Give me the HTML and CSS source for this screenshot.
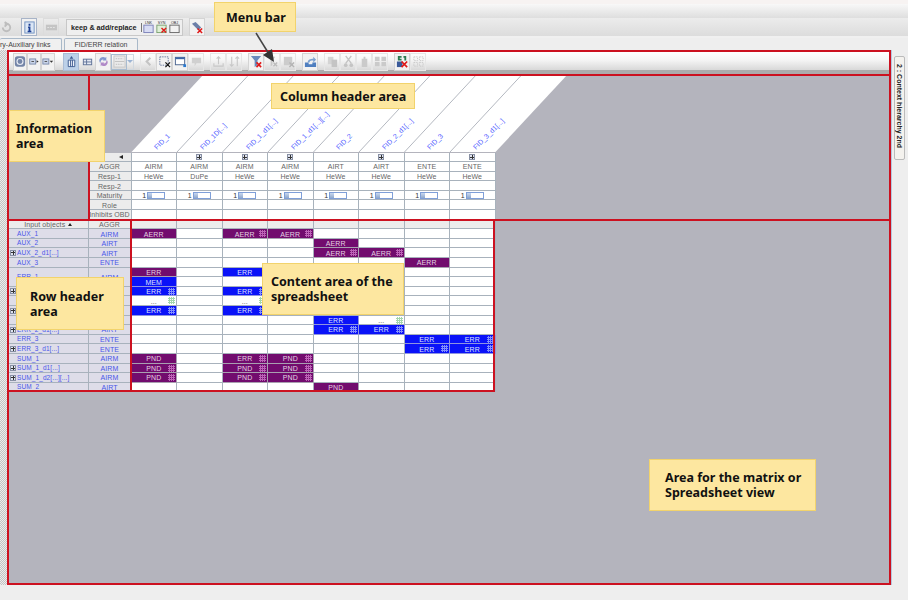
FILE: index.html
```html
<!DOCTYPE html>
<html lang="en">
<head>
    <meta charset="UTF-8">
    <meta name="viewport" content="width=device-width, initial-scale=1.0">
    <title>Matrix and Spreadsheet view</title>
    <link rel="stylesheet" href="styles.css">
</head>
<body>

    <div class="titlebar"></div>
    <div class="menubar"></div>

    <div class="topbar">
        <div class="btn top-redo off"><svg viewBox="0 0 14 14"><path d="M3 7a4 4 0 1 0 4-4H5M5 1 8 3 5 6" fill="none" stroke="#bdbdbd" stroke-width="2"/></svg></div>
        <div class="btn top-info box"><svg viewBox="0 0 14 14"><rect x="2" y="1" width="10" height="12" fill="#dbe6f5" stroke="#6f8fc0"/><path d="M6 3h2v2H6zM5.500 6H8v4.500h1V12H5v-1.500h1V7.500h-.5z" fill="#1c3f94"/></svg></div>
        <div class="btn top-gray"><svg viewBox="0 0 14 14"><rect x="1" y="4" width="12" height="6" fill="#c4c4c4"/><path d="M2.500 7h9" stroke="#e4e4e4" stroke-dasharray="2 1"/></svg></div>
        <div class="keep-group">
            <span class="keep-label">keep &amp; add/replace</span>
            <svg class="keep-icon" viewBox="0 0 14 14"><rect x="2" y="5" width="10" height="8" fill="#d8dcf4" stroke="#7a80b8"/><text x="7" y="4" class="tiny">LNK</text></svg>
            <svg class="keep-icon" viewBox="0 0 14 14"><rect x="2" y="5" width="10" height="8" fill="#dff0d8" stroke="#7aa070"/><path d="M7 8l5 5m0-5-5 5" stroke="#e01818" stroke-width="1.500"/><text x="7" y="4" class="tiny">SYN</text></svg>
            <svg class="keep-icon" viewBox="0 0 14 14"><rect x="2" y="5" width="10" height="8" fill="#f2f2f2" stroke="#666"/><text x="7" y="4" class="tiny">OBJ</text></svg>
        </div>
        <div class="btn top-shield box"><svg viewBox="0 0 14 14"><path d="M1 3 5 1l6 6-3 3z" fill="#6c7fa8"/><path d="M7 8l5 5m0-5-5 5" stroke="#e01818" stroke-width="1.600"/></svg></div>
    </div>

    <div class="tabs">
        <div class="tab tab-cut">ry-Auxiliary links</div>
        <div class="tab">FID/ERR relation</div>
    </div>

    <div class="app">
        <div class="left-strip"></div>

        <div class="center">
            <div class="toolbar">
                <div class="group narrow">
                    <div class="btn box"><svg viewBox="0 0 14 14"><rect x="1" y="1" width="12" height="12" rx="3" fill="#7485a8"/><circle cx="7" cy="7" r="3.500" fill="none" stroke="#e8ecf4" stroke-width="1.300"/></svg></div>
                    <div class="btn box"><svg viewBox="0 0 14 14"><rect x="2" y="4" width="7" height="6" fill="#c9d4e8" stroke="#7485a8"/><path d="M4 7h3" stroke="#444"/><path d="M10 5.500l2.500 1.500-2.500 1.500z" fill="#333"/></svg></div>
                    <div class="btn box"><svg viewBox="0 0 14 14"><rect x="1" y="4" width="7" height="6" fill="#c9d4e8" stroke="#7485a8"/><path d="M3 7h3" stroke="#444"/><path d="M9 6h4l-2 2.500z" fill="#333"/></svg></div>
                </div>
                <div class="group">
                    <div class="btn pressed"><svg viewBox="0 0 14 14"><path d="M3.500 5.500h7v7h-7zM6 5.500v7M8 5.500v7" fill="#eef2fa" stroke="#3b5a90"/><path d="M7 1 9 4H5z" fill="#3b5a90"/></svg></div>
                    <div class="btn"><svg viewBox="0 0 14 14"><rect x="2.500" y="4.500" width="9" height="6" fill="#e4e8f2" stroke="#5f7298"/><path d="M2.500 7.500h9M6 4.500v6" stroke="#5f7298"/></svg></div>
                    <div class="btn box"><svg viewBox="0 0 14 14"><path d="M3 8a4 4 0 0 1 6-5l1-1v4H6l1-1a2.500 2.500 0 0 0-3 3z" fill="#8298d0"/><path d="M11 6a4 4 0 0 1-6 5l-1 1V8h4l-1 1a2.500 2.500 0 0 0 3-3z" fill="#b08ac8"/></svg></div>
                    <div class="combo">
                        <div class="combo-face"><svg viewBox="0 0 14 14"><rect x="1" y="1" width="12" height="12" fill="#eaeaea" stroke="#c4c4c4"/><path d="M2 7h10" stroke="#c0c0c0"/><path d="M3 4h8M3 10h8" stroke="#bcbcbc" stroke-dasharray="1.500 1"/></svg></div>
                        <div class="combo-arrow"></div>
                    </div>
                </div>
                <div class="group">
                    <div class="btn off"><svg viewBox="0 0 14 14"><path d="M9 3 5 7l4 4" fill="none" stroke="#c4c4c4" stroke-width="2.200"/></svg></div>
                    <div class="btn box"><svg viewBox="0 0 14 14"><rect x="2" y="2" width="9" height="9" fill="none" stroke="#5f7198" stroke-dasharray="1.500 1"/><path d="M8 8l5 5m0-5-5 5" stroke="#111" stroke-width="1.300"/></svg></div>
                    <div class="btn box"><svg viewBox="0 0 14 14"><rect x="1.500" y="2.500" width="10" height="8" fill="#fff" stroke="#4a6490"/><path d="M1.500 3.500h10" stroke="#3b66a8" stroke-width="2"/><path d="M10 10h3v3h-3z" fill="#2b7ad0"/></svg></div>
                    <div class="btn off"><svg viewBox="0 0 14 14"><path d="M2 3h10v6H7l-2 3V9H2z" fill="#d0d0d0"/></svg></div>
                </div>
                <div class="group">
                    <div class="btn off"><svg viewBox="0 0 14 14"><path d="M7 2v8M5 4l2-2 2 2M2 9v3h10V9" fill="none" stroke="#c8c8c8" stroke-width="1.200"/></svg></div>
                    <div class="btn off"><svg viewBox="0 0 14 14"><path d="M4 2v10M2 10l2 2 2-2M10 12V2M8 4l2-2 2 2" fill="none" stroke="#c8c8c8" stroke-width="1.200"/></svg></div>
                </div>
                <div class="group">
                    <div class="btn box"><svg viewBox="0 0 14 14"><path d="M1 1h11L8 6v5L5 13V6z" fill="#6a8abc"/><path d="M7 8l5 5m0-5-5 5" stroke="#e01818" stroke-width="1.700"/></svg></div>
                    <div class="btn off"><svg viewBox="0 0 14 14"><path d="M2 2h8L7 6v5L5 12V6z" fill="#c8c8c8"/><path d="M8 8l4 4m0-4-4 4" stroke="#bcbcbc" stroke-width="1.500"/></svg></div>
                    <div class="btn off"><svg viewBox="0 0 14 14"><path d="M2 2h9v9H2z" fill="#cccccc"/><path d="M8 8l5 5m0-5-5 5" stroke="#b4b4b4" stroke-width="1.500"/></svg></div>
                </div>
                <div class="group">
                    <div class="btn box"><svg viewBox="0 0 14 14"><path d="M1 8v5h12V8H9v2H5V8z" fill="#4f7fc0"/><path d="M4 8c0-3 3-4 6-4V2l3 3-3 3V6C8 6 6 6 6 8z" fill="#7aa0d0"/></svg></div>
                </div>
                <div class="group">
                    <div class="btn off"><svg viewBox="0 0 14 14"><path d="M2 2h6v8H2z" fill="#d4d4d4"/><path d="M6 5h6v8H6z" fill="#c4c4c4"/></svg></div>
                    <div class="btn off"><svg viewBox="0 0 14 14"><path d="M4 1l6 8M10 1 4 9" stroke="#c4c4c4" stroke-width="1.500"/><circle cx="4" cy="11" r="2" fill="#c4c4c4"/><circle cx="10" cy="11" r="2" fill="#c4c4c4"/></svg></div>
                    <div class="btn off"><svg viewBox="0 0 14 14"><path d="M4 4h2V2h2v2h2v9H4z" fill="#cacaca"/></svg></div>
                    <div class="btn off"><svg viewBox="0 0 14 14"><path d="M1 2h5v10H1zM8 2h5v10H8z" fill="#cacaca"/><path d="M1 7h12" stroke="#eee"/></svg></div>
                </div>
                <div class="group">
                    <div class="btn box"><svg viewBox="0 0 14 14"><path d="M2 1h4v2H4v1h2v2H2zM8 1h3v5H9V3H8z" fill="#2a7a50"/><path d="M1 7h6v6H1z" fill="#3a5a9a"/><path d="M6 7l6 6m0-6-6 6" stroke="#e01818" stroke-width="1.800"/></svg></div>
                    <div class="btn off"><svg viewBox="0 0 14 14"><path d="M2 2h4v4H2zM8 2h4v4H8zM2 8h4v4H2zM8 8h4v4H8z" fill="none" stroke="#c8c8c8" stroke-dasharray="1.500 1"/></svg></div>
                </div>
            </div>

            <div class="view">
                <svg class="col-heads" width="437" height="78" viewBox="0 0 437 78">
                    <polygon points="0.5,78 73,0 437,0 364.500,78" fill="#fff"/>
                    <g stroke="#b4b8c0">
                        <line x1="46" y1="78" x2="118.500" y2="0"/>
                        <line x1="91.500" y1="78" x2="164" y2="0"/>
                        <line x1="137" y1="78" x2="209.500" y2="0"/>
                        <line x1="182.500" y1="78" x2="255" y2="0"/>
                        <line x1="228" y1="78" x2="300.500" y2="0"/>
                        <line x1="273.500" y1="78" x2="346" y2="0"/>
                        <line x1="319" y1="78" x2="391.500" y2="0"/>
                    </g>
                    <g class="col-name">
                        <text transform="translate(26 76) rotate(-45)">FID_1</text>
                        <text transform="translate(72 76) rotate(-45)">FID_1D[...]</text>
                        <text transform="translate(118 76) rotate(-45)">FID_1_d1[...]</text>
                        <text transform="translate(163 76) rotate(-45)">FID_1_d1[...][...]</text>
                        <text transform="translate(208 76) rotate(-45)">FID_2</text>
                        <text transform="translate(254 76) rotate(-45)">FID_2_d1[...]</text>
                        <text transform="translate(299 76) rotate(-45)">FID_3</text>
                        <text transform="translate(345 76) rotate(-45)">FID_3_d1[...]</text>
                    </g>
                </svg>
                <div class="sheet" id="sheet"></div>
            </div>
        </div>

        <div class="right-panel">
            <div class="side-tab"><span>2 : Context hierarchy 2nd</span></div>
        </div>
    </div>

    <!-- red marks and notes lying over the screenshot -->
    <div class="frame f-toolbar"></div>
    <div class="frame f-view"></div>
    <div class="frame f-info"></div>
    <div class="frame f-cols"></div>
    <div class="frame f-rows"></div>
    <div class="frame f-content"></div>

    <svg class="pointer" width="40" height="40" viewBox="0 0 40 40">
        <line x1="2" y1="2" x2="15" y2="23" stroke="#444" stroke-width="1.500"/>
        <polygon points="20,31 9,24 18,18" fill="#333"/>
    </svg>

    <div class="note n-menu">Menu bar</div>
    <div class="note n-cols">Column header area</div>
    <div class="note n-info">Information<br>area</div>
    <div class="note n-rows">Row header<br>area</div>
    <div class="note n-content">Content area of the<br>spreadsheet</div>
    <div class="note n-area">Area for the matrix or<br>Spreadsheet view</div>

    <script>
        const aggr = ["AIRM", "AIRM", "AIRM", "AIRM", "AIRT", "AIRT", "ENTE", "ENTE"];
        const resp = ["HeWe", "DuPe", "HeWe", "HeWe", "HeWe", "HeWe", "HeWe", "HeWe"];
        const expandable = [1, 2, 3, 5, 7];

        // p = purple, b = blue, w = white with "...", trailing + means the dotted marker
        // rows under the "Row header area" note keep no text, the note covers them
        const rows = [
            { name: "AUX_1", type: "AIRM", cells: { 0: "p:AERR", 2: "p:AERR+", 3: "p:AERR+" } },
            { name: "AUX_2", type: "AIRT", cells: { 4: "p:AERR" } },
            { name: "AUX_2_d1[...]", type: "AIRT", plus: true, cells: { 4: "p:AERR+", 5: "p:AERR+" } },
            { name: "AUX_3", type: "ENTE", cells: { 6: "p:AERR" } },
            { name: "ERR_1", type: "AIRM", span: 2, cells: { 0: "p:ERR", 2: "b:ERR" } },
            { skipHead: true, cells: { 0: "b:MEM" } },
            { name: "", type: "", plus: true, cells: { 0: "b:ERR+", 2: "b:ERR+" } },
            { name: "", type: "", cells: { 0: "w:...+", 2: "w:...+" } },
            { name: "", type: "", plus: true, cells: { 0: "b:ERR+", 2: "b:ERR+" } },
            { name: "", type: "", cells: { 4: "b:ERR", 5: "w:...+" } },
            { name: "ERR_2_d1[...]", type: "AIRT", plus: true, cells: { 4: "b:ERR+", 5: "b:ERR+" } },
            { name: "ERR_3", type: "ENTE", cells: { 6: "b:ERR", 7: "b:ERR+" } },
            { name: "ERR_3_d1[...]", type: "ENTE", plus: true, cells: { 6: "b:ERR+", 7: "b:ERR+" } },
            { name: "SUM_1", type: "AIRM", cells: { 0: "p:PND", 2: "p:ERR+", 3: "p:PND+" } },
            { name: "SUM_1_d1[...]", type: "AIRM", plus: true, cells: { 0: "p:PND+", 2: "p:PND+", 3: "p:PND+" } },
            { name: "SUM_1_d2[...][...]", type: "AIRM", plus: true, cells: { 0: "p:PND+", 2: "p:PND+", 3: "p:PND+" } },
            { name: "SUM_2", type: "AIRT", cells: { 4: "p:PND" } }
        ];

        const sheet = document.getElementById("sheet");

        function addCell(className, html, spanRows) {
            const cell = document.createElement("div");
            cell.className = className;
            cell.innerHTML = html || "";
            if (spanRows) cell.style.gridRow = "span " + spanRows;
            sheet.appendChild(cell);
        }

        function addInfoRow(label, makeCell) {
            addCell("blank");
            addCell("cell info", label);
            for (let i = 0; i < 8; i++) {
                addCell("cell", makeCell(i));
            }
        }

        addInfoRow('<span class="arrow-left"></span>', i => expandable.includes(i) ? '<span class="plus"></span>' : "");
        addInfoRow("AGGR", i => aggr[i]);
        addInfoRow("Resp-1", i => resp[i]);
        addInfoRow("Resp-2", () => "");
        addInfoRow("Maturity", () => '<span class="maturity">1<span class="meter"></span></span>');
        addInfoRow("Role", () => "");
        addInfoRow("Inhibits OBD", () => "");

        addCell("cell info", 'Input objects <span class="arrow-up"></span>');
        addCell("cell info", "AGGR");
        for (let i = 0; i < 8; i++) addCell("cell info");

        const kinds = { p: "purple", b: "blue", w: "plain" };

        rows.forEach(row => {
            if (!row.skipHead) {
                const plus = row.plus ? '<span class="plus"></span>' : "";
                addCell("cell row-name", plus + row.name, row.span);
                addCell("cell row-type", row.type, row.span);
            }
            for (let i = 0; i < 8; i++) {
                const value = row.cells[i];
                if (!value) {
                    addCell("cell");
                    continue;
                }
                const kind = kinds[value[0]];
                const dots = value.endsWith("+");
                const text = value.slice(2).replace("+", "");
                addCell("cell mark " + kind + (dots ? " dots" : ""), text);
            }
        });
    </script>

</body>
</html>
```

FILE: styles.css
```css
* {
    box-sizing: border-box;
}
body {
    margin: 0;
    width: 908px;
    height: 600px;
    overflow: hidden;
    position: relative;
    background-color: #eeeeee;
    font-family: "Liberation Sans", Arial, sans-serif;
    color: #333;
}
.titlebar {
    height: 4px;
    background-color: #f7f3f2;
}
.menubar {
    height: 14px;
    background: linear-gradient(#f8f8f8, #dedede);
}
.topbar {
    height: 20px;
    padding-bottom: 2px;
    display: flex;
    align-items: center;
    background: linear-gradient(#ececec 0, #dcdcdc 90%, #f0f0f0 90%);
}
.btn {
    width: 16px;
    height: 18px;
    flex: none;
    display: flex;
    align-items: center;
    justify-content: center;
}
.btn svg, .combo-face svg {
    width: 13px;
    height: 13px;
}
.box {
    border: 1px solid #d4d4d4;
    background-color: #f2f2f2;
}
.off {
    border: 1px solid #e6e6e6;
}
.pressed {
    border: 1px solid #a9bcd6;
    background-color: #bcd0e8;
}
.top-redo {
    margin-left: -2px;
    border: none;
}
.top-info {
    margin-left: 7px;
    border-color: #a8b4c8;
}
.top-gray {
    margin-left: 6px;
    border: 1px solid #dcdcdc;
}
.keep-group {
    margin-left: 7px;
    width: 117px;
    height: 17px;
    flex: none;
    display: flex;
    align-items: center;
    padding-left: 4px;
    border: 1px solid #c8c8c8;
    background-color: #efefef;
}
.keep-label {
    width: 71px;
    flex: none;
    font-size: 7.200px;
    font-weight: bold;
    white-space: nowrap;
    border-right: 1px solid #777;
    color: #222;
}
.keep-icon {
    width: 13px;
    height: 14px;
}
.tiny {
    font-size: 4px;
    text-anchor: middle;
    fill: #333;
}
.top-shield {
    margin-left: 6px;
}
.tabs {
    height: 12px;
    display: flex;
    align-items: flex-end;
    background-color: #eeeeee;
}
.tab {
    width: 74px;
    height: 12px;
    margin-left: 2px;
    font-size: 7px;
    line-height: 11px;
    text-align: center;
    white-space: nowrap;
    color: #444;
    border: 1px solid #a9b9c9;
    border-bottom: none;
    border-radius: 2px 2px 0 0;
    background-color: #f0f0f0;
}
.tab-cut {
    width: 62px;
    margin-left: 0;
    border-left: none;
    text-align: left;
}
.app {
    height: 535px;
    display: flex;
}
.left-strip {
    width: 7px;
    flex: none;
    height: 535px;
    background-color: #dcdcdc;
    background-image: repeating-conic-gradient(#c4c4c4 0 25%, #ececec 0 50%);
    background-size: 2px 2px;
}
.center {
    width: 884px;
    flex: none;
    height: 535px;
    display: flex;
    flex-direction: column;
}
.toolbar {
    height: 24px;
    padding: 2px 0 3px 6px;
    display: flex;
    align-items: center;
    background: linear-gradient(#ffffff 2px, #f6f6f6 40%, #d8d8d8 84%, #acacac 84%);
}
.group {
    display: flex;
    margin-right: 6px;
}
.narrow {
    margin-right: 8px;
}
.narrow .btn {
    width: 14px;
}
.combo {
    display: flex;
    width: 23px;
    height: 18px;
    align-items: center;
}
.combo-face {
    width: 16px;
    height: 16px;
    display: flex;
    align-items: center;
    justify-content: center;
    border: 1px solid #a9bcd0;
}
.combo-arrow {
    width: 7px;
    height: 16px;
    display: flex;
    align-items: center;
    justify-content: center;
    border: 1px solid #d0d8e0;
    border-left: none;
}
.combo-arrow::before {
    content: "";
    border-left: 3px solid transparent;
    border-right: 3px solid transparent;
    border-top: 3px solid #9cb4d4;
}
.view {
    width: 884px;
    height: 511px;
    background-color: #b4b4bd;
    overflow: hidden;
}
.col-heads {
    display: block;
    margin-left: 124px;
}
.col-name {
    font-size: 7px;
    fill: #4f5cff;
}
.sheet {
    margin-left: 2px;
    margin-top: 0.500px;
    display: grid;
    grid-template-columns: 79.500px 43px repeat(8, 45.500px);
    grid-auto-rows: 9.600px;
}
.cell {
    position: relative;
    display: flex;
    align-items: center;
    justify-content: center;
    padding-top: 1px;
    overflow: hidden;
    font-size: 7px;
    line-height: 1;
    letter-spacing: 0.100px;
    white-space: nowrap;
    color: #666;
    background-color: #ffffff;
    border-right: 1px solid #a8b2bc;
    border-bottom: 1px solid #a8b2bc;
}
.info {
    background-color: #ececec;
    color: #666;
}
.row-name {
    justify-content: flex-start;
    padding-left: 8px;
    font-size: 6.500px;
    color: #4a55e8;
    background-color: #dedde8;
}
.row-name .plus {
    position: absolute;
    left: 1px;
    top: 1.500px;
}
.row-type {
    color: #4a55e8;
    background-color: #dedde8;
}
.plus {
    width: 6px;
    height: 6px;
    flex: none;
    border: 1px solid #8890a4;
    background: linear-gradient(#333, #333) center / 4px 1px no-repeat,
                linear-gradient(#333, #333) center / 1px 4px no-repeat,
                #dfe3f0;
}
.arrow-left {
    margin-left: 22px;
    border-top: 2.500px solid transparent;
    border-bottom: 2.500px solid transparent;
    border-right: 4px solid #222;
}
.arrow-up {
    margin-left: 3px;
    border-left: 2.500px solid transparent;
    border-right: 2.500px solid transparent;
    border-bottom: 3.500px solid #222;
}
.maturity {
    display: flex;
    align-items: center;
    color: #333;
}
.meter {
    width: 18px;
    height: 7px;
    margin-left: 1px;
    border: 1px solid #7f9fd8;
    background: linear-gradient(#c8d8f0, #8fa8cc) left / 4px 100% no-repeat, #ffffff;
}
.purple {
    background-color: #720c6e;
    color: #e2d2e2;
    border-color: #a8a0b0;
}
.blue {
    background-color: #0a12f8;
    color: #dfe2ff;
    border-color: #8f94e0;
}
.plain {
    color: #555;
}
.dots::after {
    content: "";
    position: absolute;
    right: 1px;
    top: 1px;
    width: 7px;
    height: 7px;
    background-image: repeating-linear-gradient(90deg, transparent 0 1px, var(--dot) 1px 2px),
                      repeating-linear-gradient(0deg, transparent 0 1px, var(--dot) 1px 2px);
    opacity: 0.9;
}
.purple.dots {
    --dot: #c66cc0;
}
.blue.dots {
    --dot: #8f9cff;
}
.plain.dots {
    --dot: #9ad2a4;
}
.right-panel {
    width: 17px;
    flex: none;
    height: 535px;
    padding: 6px 3px 0 2px;
    border-left: 1px solid #b4c8e0;
    background-color: #eeeeee;
}
.side-tab {
    width: 11px;
    height: 104px;
    display: flex;
    justify-content: center;
    padding-top: 7px;
    border: 1px solid #bbb;
    border-radius: 2px;
    background-color: #f4f2ee;
}
.side-tab span {
    writing-mode: vertical-rl;
    font-size: 7px;
    line-height: 9px;
    font-weight: bold;
    white-space: nowrap;
    color: #222;
}
.frame {
    position: absolute;
    border: 2px solid #cc1120;
}
.f-toolbar {
    left: 7px;
    top: 50px;
    width: 884px;
    height: 26px;
}
.f-view {
    left: 7px;
    top: 74px;
    width: 884px;
    height: 511px;
}
.f-info {
    left: 7px;
    top: 74px;
    width: 83px;
    height: 147px;
}
.f-cols {
    left: 88px;
    top: 74px;
    width: 803px;
    height: 147px;
}
.f-rows {
    left: 7px;
    top: 219px;
    width: 125px;
    height: 173px;
}
.f-content {
    left: 130px;
    top: 219px;
    width: 365px;
    height: 173px;
}
.pointer {
    position: absolute;
    left: 254px;
    top: 31px;
}
.note {
    position: absolute;
    display: flex;
    align-items: center;
    font-family: "Noto Sans", "Open Sans", sans-serif;
    font-size: 12.500px;
    line-height: 15px;
    font-weight: 700;
    color: #111;
    background-color: #fde7a0;
    border: 1px solid #f2d36c;
}
.n-menu {
    left: 214px;
    top: 2px;
    width: 82px;
    height: 30px;
    padding-left: 11px;
}
.n-cols {
    left: 271px;
    top: 83px;
    width: 144px;
    height: 26px;
    padding-left: 8px;
}
.n-info {
    left: 9px;
    top: 110px;
    width: 96px;
    height: 52px;
    padding-left: 6px;
}
.n-rows {
    left: 16px;
    top: 277px;
    width: 108px;
    height: 53px;
    padding-left: 13px;
}
.n-content {
    left: 262px;
    top: 263px;
    width: 142px;
    height: 52px;
    padding-left: 8px;
}
.n-area {
    left: 649px;
    top: 459px;
    width: 167px;
    height: 52px;
    padding-left: 15px;
}
```
